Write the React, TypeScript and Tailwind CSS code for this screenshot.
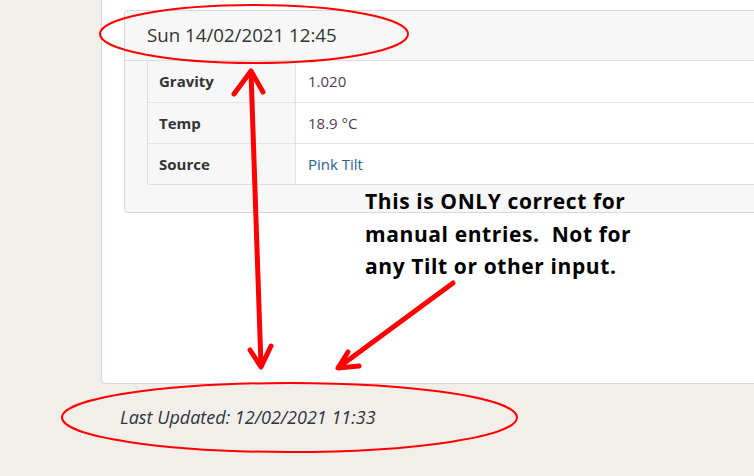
import React from "react";

const rows = [
  { label: "Gravity", value: "1.020", color: "text-[#553a5c]" },
  { label: "Temp", value: "18.9 °C", color: "text-[#553a5c]" },
  { label: "Source", value: "Pink Tilt", color: "text-[#28608f]" },
];

function Markup() {
  return (
    <svg className="absolute inset-0 pointer-events-none" width="754" height="476" viewBox="0 0 754 476">
      <ellipse cx="254" cy="34" rx="154" ry="29" fill="none" stroke="#ff0000" strokeWidth="2" />
      <ellipse cx="289.5" cy="417.5" rx="227.5" ry="34.5" fill="none" stroke="#ff0000" strokeWidth="2" />
      <g stroke="#ff0000" strokeWidth="5" strokeLinecap="round" strokeLinejoin="round" fill="none">
        <path d="M251 72 L261 366" />
        <path d="M234 94 L251 71 L263 92" />
        <path d="M250 350 L261 367 L271 346" />
        <path d="M453 283 L339 367" />
        <path d="M348 352 L338 368 L359 366" />
      </g>
    </svg>
  );
}

export default function App() {
  return (
    <div className="relative w-[754px] h-[476px] overflow-hidden bg-[#f2efeb] font-['Open_Sans',sans-serif] text-[#333]">
      <div className="pl-[101px]">
        <div className="h-[384px] w-[700px] bg-white border-l border-b border-[#d6d6d6] rounded-bl-[5px] pt-[10px] pl-[22px]">
          <div className="w-[700px] h-[203px] bg-[#f7f7f7] border border-[#d8d8d8] rounded-[4px]">
            <div className="h-[50px] border-b border-[#dddddd] pl-[22px] flex items-center text-[18.7px]">
              Sun 14/02/2021 12:45
            </div>
            <div className="pl-[22px]">
              <div className="border-l border-b border-[#dddddd] rounded-bl-[4px] overflow-hidden">
                {rows.map((r, i) => (
                  <div key={r.label} className={`flex h-[41px] text-[15px] ${i > 0 ? "border-t border-[#e3e3e3]" : ""}`}>
                    <div className="w-[148px] shrink-0 pl-[11px] flex items-center font-bold bg-[#f7f7f7] border-r border-[#e3e3e3]">
                      {r.label}
                    </div>
                    <div className={`flex-1 bg-white pl-[12px] flex items-center ${r.color}`}>{r.value}</div>
                  </div>
                ))}
              </div>
            </div>
          </div>
        </div>
      </div>
      <div className="pl-[120px] pt-[20px] italic text-[18px] text-[#2e3440]">Last Updated: 12/02/2021 11:33</div>
      <div className="absolute left-[365px] top-[185px] font-['Open_Sans',sans-serif] font-bold text-[21px] leading-[32.5px] tracking-[0.6px] text-black">
        <div>This is ONLY correct for</div>
        <div>manual entries.&nbsp; Not for</div>
        <div>any Tilt or other input.</div>
      </div>
      <Markup />
    </div>
  );
}
